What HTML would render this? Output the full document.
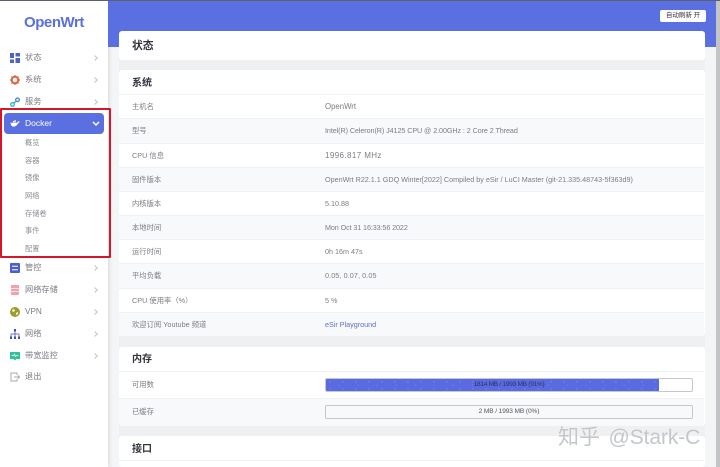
<!DOCTYPE html>
<html lang="zh"><head><meta charset="utf-8"><title>OpenWrt</title>
<style>
*{box-sizing:border-box}
html,body{margin:0;padding:0}
body{width:720px;height:467px;overflow:hidden;position:relative;background:#f4f5f6;font-family:"Liberation Sans","Noto Sans CJK SC",sans-serif;color:#6b6d75}
#wrap{position:absolute;left:0;top:0;width:720px;height:467px;filter:blur(.3px)}
.a{position:absolute;white-space:nowrap}
#top{left:0;top:0;width:720px;height:1px;background:#5a5f72}
#side{left:0;top:1px;width:108px;height:466px;background:#fff;box-shadow:1px 0 4px rgba(0,0,0,.12)}
#hdr{left:108px;top:1px;width:608px;height:46px;background:#5a6fe0}
#sb{left:716px;top:0;width:4px;height:467px;background:#c4c4c4}
#back{left:119px;top:47px;width:586px;height:420px;background:#eef0f1}
#logo{left:24px;top:13px;font-size:15px;font-weight:bold;color:#5a6fe0;line-height:20px;letter-spacing:-.45px}
.m{left:25px;font-size:8.2px;line-height:12px;color:#7a7c84}
.s{left:25px;font-size:7.2px;line-height:12px;color:#8b8d94}
.ch{left:93px;width:4px;height:4px;border-top:1px solid #c4c4c4;border-right:1px solid #c4c4c4;transform:rotate(45deg)}
.ic{left:10px;width:10px;height:10px;display:block}
#act{left:4px;top:113px;width:100px;height:21px;background:#5a6fe0;border-radius:4px}
#red{left:0;top:108px;width:111px;height:150px;border:2px solid #d5162a;border-radius:1px}
.card{left:119px;width:586px;background:#fff;border-radius:3px}
.t{left:132px;font-size:10px;font-weight:bold;color:#32343c;line-height:14px}
.row{left:119px;width:585px;border-top:1px solid #f0f1f3}
.g{background:#f8f9fa}
.k{left:132px;font-size:7.3px;line-height:12px;color:#7b7d84}
.v{left:325px;font-size:7.2px;line-height:12px;color:#7b7d84}
.bar{left:325px;width:368px;height:14px;border:1px solid #c6c7c9;border-radius:2px;background:#fff;font-size:6.6px;line-height:12px;text-align:center;color:#55565c}
#fill{left:0;top:0;width:333px;height:12px;background-color:#5a6ae0;background-image:radial-gradient(circle at 30% 40%,#6f7ee8 0,#6f7ee8 .5px,transparent 1.2px),radial-gradient(circle at 70% 70%,#6876e6 0,#6876e6 .6px,transparent 1.3px);background-size:13px 7px,19px 9px}
</style></head><body><div id="wrap">
<div class="a" id="side"></div>
<div class="a" id="back"></div>
<div class="a" id="hdr"></div>
<div class="a" id="sb"></div>
<div class="a" id="top"></div>
<div class="a" id="logo">OpenWrt</div>

<svg class="a ic" style="top:53px" viewBox="0 0 10 10"><path fill="#4a64c8" d="M0 0h4v5H0zM5.500 0H10v3.500H5.500zM0 6.500h4V10H0zM5.500 5H10v5H5.500z"/></svg>
<div class="a m" style="top:52px">状态</div><div class="a ch" style="top:56px"></div>
<svg class="a ic" style="top:75px" viewBox="0 0 10 10"><circle cx="5" cy="5" r="3.300" fill="none" stroke="#e2603a" stroke-width="2"/><path stroke="#e2603a" stroke-width="1.200" d="M5 0v2M5 8v2M0 5h2M8 5h2M1.500 1.500l1.200 1.200M7.300 7.300l1.200 1.200M1.500 8.500l1.200-1.200M7.300 2.700l1.200-1.200"/></svg>
<div class="a m" style="top:74px">系统</div><div class="a ch" style="top:78px"></div>
<svg class="a ic" style="top:97px" viewBox="0 0 10 10"><circle cx="7.500" cy="2.800" r="1.800" fill="none" stroke="#3f7fd8" stroke-width="1.300"/><circle cx="2.500" cy="7.500" r="1.800" fill="none" stroke="#2fb5c9" stroke-width="1.300"/><path stroke="#3f9ad0" stroke-width="1.200" d="M3.800 6.200l2.400-2.200"/></svg>
<div class="a m" style="top:96px">服务</div><div class="a ch" style="top:100px"></div>

<div class="a" id="act"></div>
<svg class="a ic" style="top:118px" viewBox="0 0 10 10"><path fill="#fff" d="M.5 4.800h6.700c.2-1 .8-1.500 1.500-1.500l.9.500c-.2.900-.8 1.400-1.500 1.500C7.100 7.600 5.400 8.600 3.500 8.600 1.600 8.600.6 6.900.5 4.800z"/><path fill="#fff" d="M3 3h1.200v1.400H3zM4.500 2h1.200v2.400H4.500z"/></svg>
<div class="a m" style="top:117px;color:#fff;font-size:8.5px">Docker</div>
<svg class="a" style="left:92px;top:121px;width:8px;height:6px" viewBox="0 0 8 6"><path d="M1 1l3 3 3-3" fill="none" stroke="#fff" stroke-width="1.500"/></svg>
<div class="a s" style="top:137px">概览</div>
<div class="a s" style="top:155px">容器</div>
<div class="a s" style="top:172px">镜像</div>
<div class="a s" style="top:190px">网络</div>
<div class="a s" style="top:208px">存储卷</div>
<div class="a s" style="top:225px">事件</div>
<div class="a s" style="top:243px">配置</div>
<div class="a" id="red"></div>

<svg class="a ic" style="top:263px" viewBox="0 0 10 10"><rect width="10" height="10" rx="1" fill="#4a5fc9"/><path stroke="#fff" d="M2 3.200h6M2 6.800h6"/></svg>
<div class="a m" style="top:262px">管控</div><div class="a ch" style="top:266px"></div>
<svg class="a ic" style="top:285px" viewBox="0 0 10 10"><rect x="1" width="8" height="10" rx="1" fill="#f0a3ad"/><path stroke="#fff" stroke-width=".7" d="M1 3.300h8M1 6.600h8"/></svg>
<div class="a m" style="top:284px">网络存储</div><div class="a ch" style="top:288px"></div>
<svg class="a ic" style="top:307px" viewBox="0 0 10 10"><circle cx="5" cy="5" r="5" fill="#9aa02c"/><path fill="#fff" d="M2 3l2-1 1 2-2 1zM6 6l2-1 0 2-2 1z"/></svg>
<div class="a m" style="top:306px">VPN</div><div class="a ch" style="top:310px"></div>
<svg class="a ic" style="top:329px" viewBox="0 0 10 10"><path fill="#3f4fb5" d="M4 0h2v2.500H4zM0 7.500h2V10H0zM4 7.500h2V10H4zM8 7.500h2V10H8z"/><path stroke="#3f4fb5" stroke-width=".7" fill="none" d="M5 2.500v5M1 7.500V5h8v2.500"/></svg>
<div class="a m" style="top:328px">网络</div><div class="a ch" style="top:332px"></div>
<svg class="a ic" style="top:351px" viewBox="0 0 10 10"><path fill="#2fc39a" d="M0 1h10v7H6.500L5 9.500 3.500 8H0z"/><path stroke="#fff" stroke-width=".8" fill="none" d="M1.500 4.500h2l1-1.200 1 2.200 1-1h2"/></svg>
<div class="a m" style="top:350px">带宽监控</div><div class="a ch" style="top:354px"></div>
<svg class="a ic" style="top:372px" viewBox="0 0 10 10"><path fill="none" stroke="#a8a9ad" stroke-width="1" d="M7 3V1H1v8h6V7M4 5h5.500M7.800 3.300L9.500 5 7.800 6.700"/></svg>
<div class="a m" style="top:371px">退出</div>

<div class="a" style="left:660px;top:10px;width:46px;height:12px;background:#fff;border-radius:2px;font-size:6.5px;line-height:12px;text-align:center;color:#35363c">自动刷新 开</div>

<div class="a card" style="top:31px;height:29px"></div>
<div class="a t" style="top:39px;font-size:10.8px">状态</div>

<div class="a card" style="top:70px;height:266px"></div>
<div class="a t" style="top:77px">系统</div>
<div class="a row" style="top:94px;height:24px"></div>
<div class="a row g" style="top:118px;height:25px"></div>
<div class="a row" style="top:143px;height:24px"></div>
<div class="a row g" style="top:167px;height:24px"></div>
<div class="a row" style="top:191px;height:24px"></div>
<div class="a row g" style="top:215px;height:24px"></div>
<div class="a row" style="top:239px;height:24px"></div>
<div class="a row g" style="top:263px;height:25px"></div>
<div class="a row" style="top:288px;height:24px"></div>
<div class="a row g" style="top:312px;height:24px"></div>

<div class="a k" style="top:101px">主机名</div><div class="a v" style="top:101px;font-size:7.8px">OpenWrt</div>
<div class="a k" style="top:125px">型号</div><div class="a v" style="top:125px;letter-spacing:-.08px">Intel(R) Celeron(R) J4125 CPU @ 2.00GHz : 2 Core 2 Thread</div>
<div class="a k" style="top:150px">CPU 信息</div><div class="a v" style="top:150px;font-size:8px;letter-spacing:.4px">1996.817 MHz</div>
<div class="a k" style="top:174px">固件版本</div><div class="a v" style="top:174px">OpenWrt R22.1.1 GDQ Winter[2022] Compiled by eSir / LuCI Master (git-21.335.48743-5f363d9)</div>
<div class="a k" style="top:198px">内核版本</div><div class="a v" style="top:198px">5.10.88</div>
<div class="a k" style="top:222px">本地时间</div><div class="a v" style="top:222px;letter-spacing:-.1px">Mon Oct 31 16:33:56 2022</div>
<div class="a k" style="top:246px">运行时间</div><div class="a v" style="top:246px">0h 16m 47s</div>
<div class="a k" style="top:270px">平均负载</div><div class="a v" style="top:270px;letter-spacing:.1px">0.05, 0.07, 0.05</div>
<div class="a k" style="top:295px">CPU 使用率（%）</div><div class="a v" style="top:295px">5 %</div>
<div class="a k" style="top:319px">欢迎订阅 Youtube 频道</div><div class="a v" style="top:319px;color:#5f6fc8">eSir Playground</div>

<div class="a card" style="top:347px;height:79px"></div>
<div class="a t" style="top:353px">内存</div>
<div class="a row" style="top:371px;height:27px"></div>
<div class="a row g" style="top:398px;height:28px;border-radius:0 0 3px 3px"></div>
<div class="a k" style="top:379px">可用数</div>
<div class="a k" style="top:406px">已缓存</div>
<div class="a bar" style="top:378px;overflow:hidden;letter-spacing:-.3px"><div class="a" id="fill"></div><span style="position:relative;color:#2c3068">1814 MB / 1993 MB (91%)</span></div>
<div class="a bar" style="top:405px;background:#f8f9fa;letter-spacing:-.12px">2 MB / 1993 MB (0%)</div>

<div class="a card" style="top:436px;height:31px"></div>
<div class="a t" style="top:443px">接口</div>
<div class="a row" style="top:460px;height:7px"></div>

<div class="a" style="left:558px;top:427px;font-size:21px;line-height:22px;color:#c4c6c9;word-spacing:3px;letter-spacing:-.1px;text-shadow:0 0 1px #fff">知乎 @Stark-C</div>
</div></body></html>
